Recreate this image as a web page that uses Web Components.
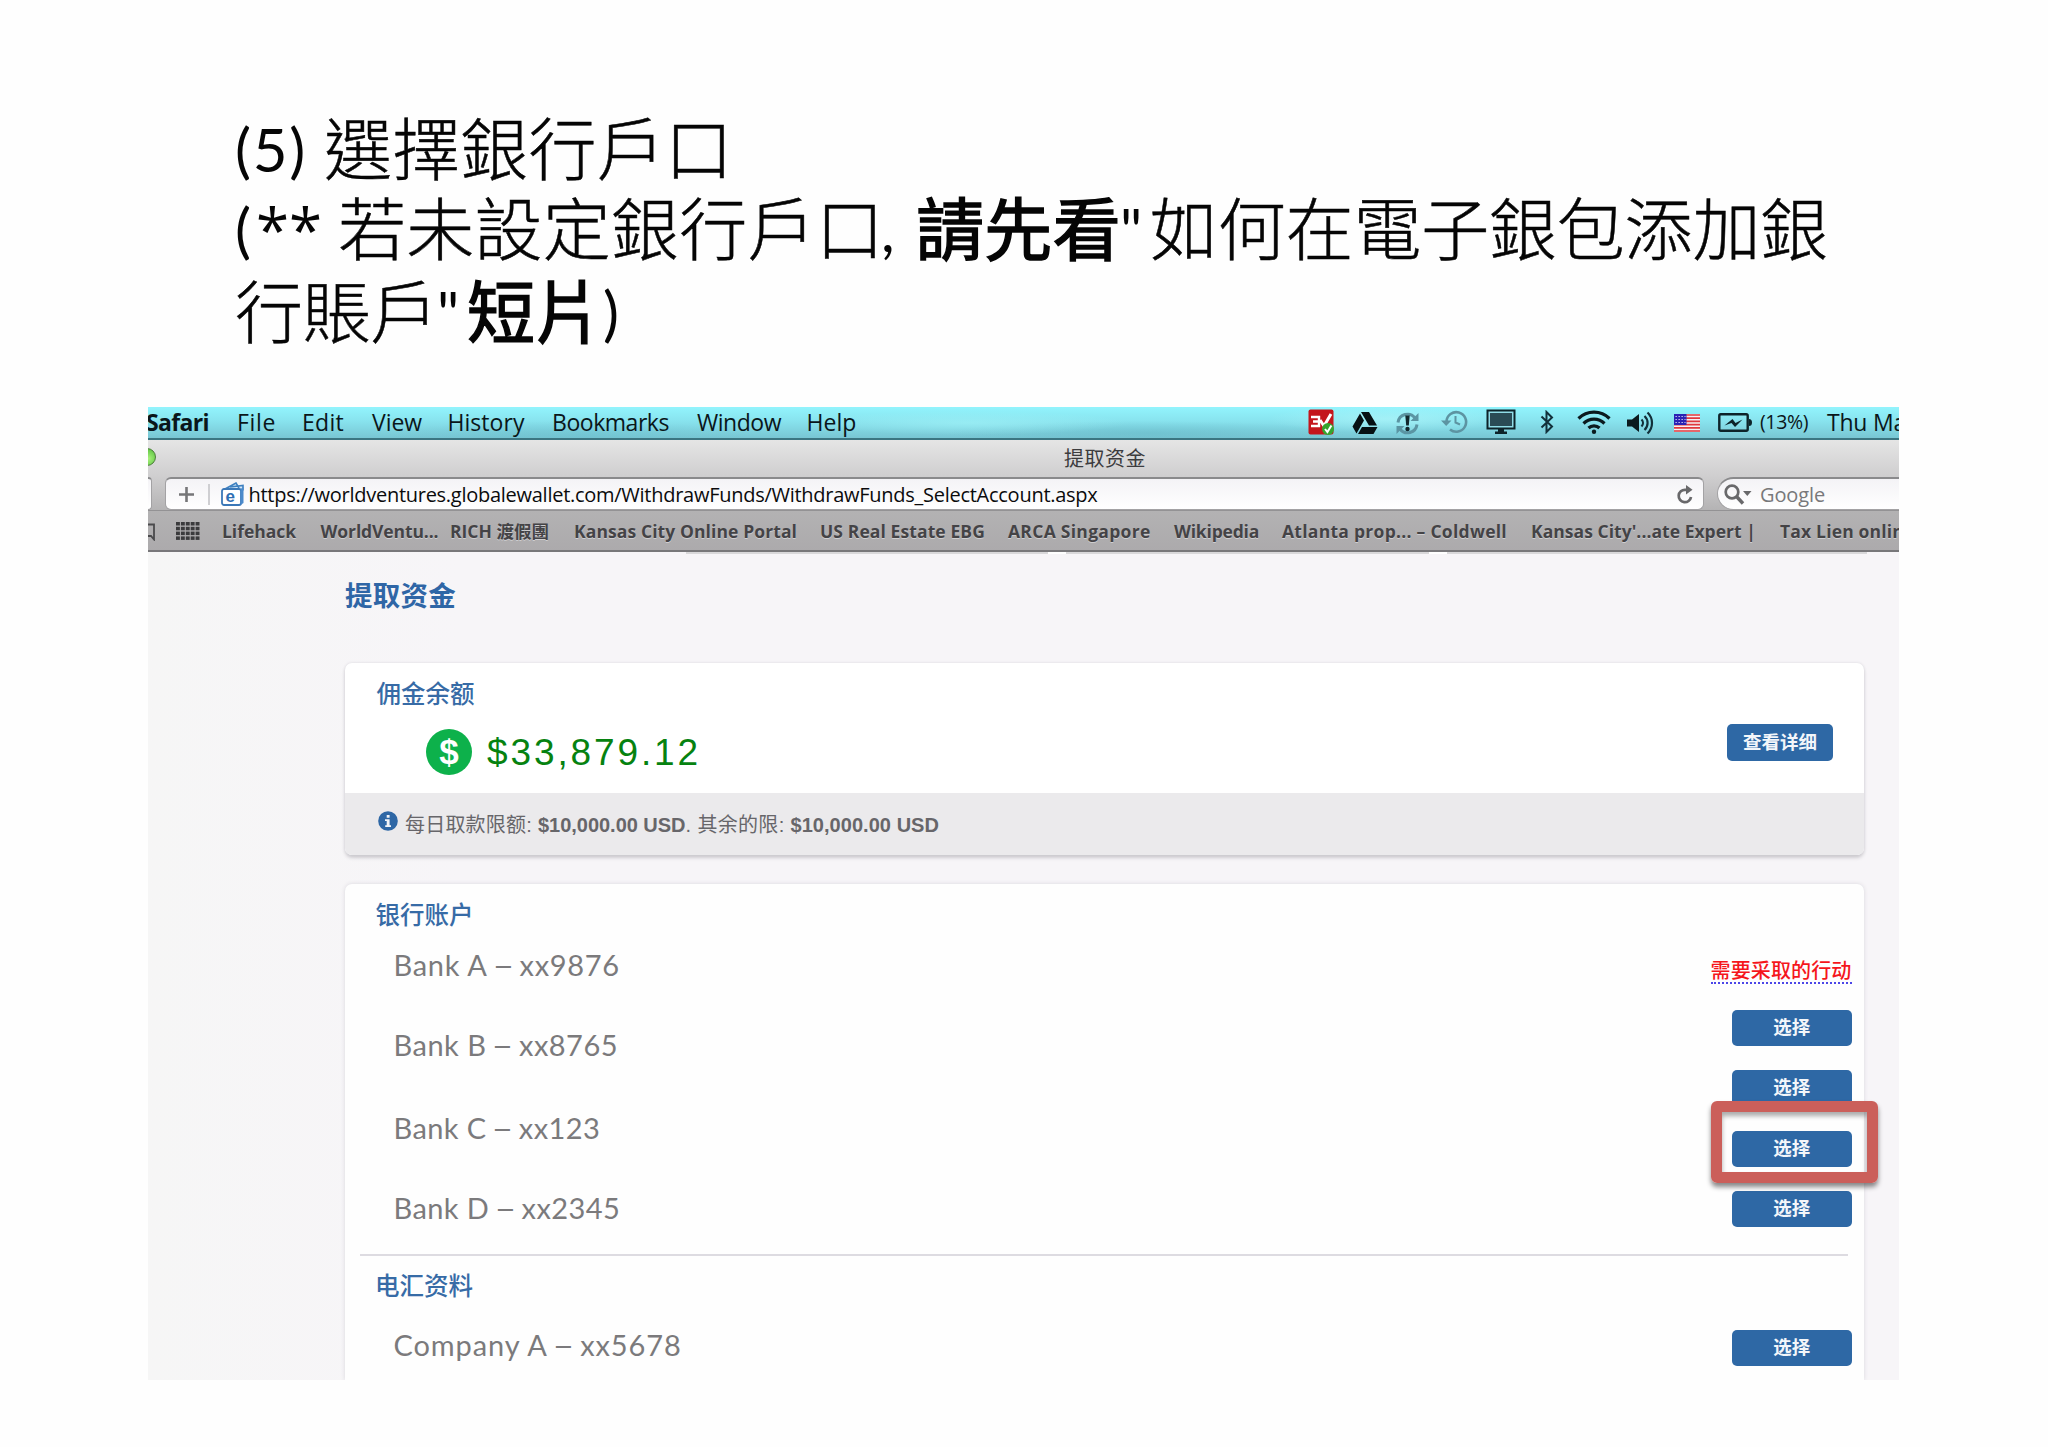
<!DOCTYPE html>
<html lang="zh">
<head>
<meta charset="utf-8">
<title>選擇銀行戶口</title>
<style>
html,body{margin:0;background:#fff}
body{width:2048px;height:1447px;overflow:hidden}
</style>
</head>
<body>
<slide-page></slide-page>
<script>
const define = (name, html, setup) => customElements.define(name, class extends HTMLElement {
  connectedCallback() {
    if (this.shadowRoot) return;
    this.attachShadow({mode: 'open'}).innerHTML = typeof html === 'function' ? html(this) : html;
    if (setup) setup(this, this.shadowRoot);
  }
});

/* One line of text, tracked so that it fills the width given in "w". */
define('fit-text', `<style>:host{display:block;flex:none;white-space:pre}span{display:inline-block;white-space:pre}</style><span><slot></slot></span>`,
  (el, root) => {
    const w = +el.getAttribute('w'), s = root.querySelector('span');
    const n = [...el.textContent].length;
    el.style.width = w + 'px';
    el.style.marginLeft = (el.getAttribute('gap') || 0) + 'px';
    s.style.letterSpacing = ((w - s.getBoundingClientRect().width) / n) + 'px';
  });

const ICONS = {
  av: [26,26,`<rect x=".5" y=".5" width="25" height="25" rx="2" fill="#c4161c"/><path d="M3 8h8v9H3m2-4.5h6" fill="none" stroke="#fff" stroke-width="2.4"/><path d="M12 11l4 6 7-12" fill="none" stroke="#fff" stroke-width="3"/><circle cx="20" cy="20" r="6" fill="#35a52f"/><path d="M17 20l2.4 3 4-6.500" fill="none" stroke="#fff" stroke-width="2"/>`],
  drive: [26,24,`<path d="M9 1h8l8 13.500h-8zM8 2.500l4 7L4.500 22.500l-4-7zM10 16h15.500l-4 7H6z" fill="#071114"/>`],
  sync: [25,25,`<g fill="none" stroke="#5b95a3" stroke-width="3"><path d="M3 11.500A9.500 9.500 0 0 1 20 7"/><path d="M22 13.500A9.500 9.500 0 0 1 5 18"/></g><path d="M23.500 2v8h-8zM1.500 23v-8h8z" fill="#5b95a3"/><path d="M10.300 4.500h4.400l-.9 10h-2.600z" fill="#12272d"/><circle cx="12.500" cy="18" r="2.200" fill="#12272d"/>`],
  clock: [27,24,`<path d="M5.500 11.500A9.800 9.800 0 1 1 9 19.500" fill="none" stroke="#5d94a2" stroke-width="2.600"/><path d="M0 10.500h10.500L5.200 16z" fill="#5d94a2"/><path d="M14.500 6v6.500l4.500 2" fill="none" stroke="#5d94a2" stroke-width="2"/>`],
  monitor: [30,25,`<rect x="1.500" y="1.500" width="27" height="18" fill="#8fdbe6" stroke="#0d2329" stroke-width="2"/><rect x="4" y="4" width="22" height="13" fill="#2a4b55"/><path d="M12 20h6v2.500h3V25H9v-2.500h3z" fill="#0d2329"/>`],
  bluetooth: [14,24,`<path d="M1.500 6.500l10.500 10-5.500 5.500V2L12 7.500 1.500 17.500" fill="none" stroke="#12303a" stroke-width="2"/>`],
  wifi: [34,25,`<g fill="none" stroke="#0b1a1e" stroke-width="3.200"><path d="M1.500 9.500a22 22 0 0 1 31 0"/><path d="M6.500 14.500a15 15 0 0 1 21 0"/><path d="M11.500 19a8 8 0 0 1 11 0"/></g><circle cx="17" cy="22.800" r="2.200" fill="#0b1a1e"/>`],
  speaker: [27,24,`<path d="M0 8.500h5L12 3v18l-7-5.500H0z" fill="#0b1a1e"/><g fill="none" stroke="#12303a" stroke-width="2.200"><path d="M14.500 8.500a5 5 0 0 1 0 7"/><path d="M17.500 5a9.500 9.500 0 0 1 0 14"/><path d="M20.500 1.500a14.500 14.500 0 0 1 0 21"/></g>`],
  flag: [26,18,`<rect width="26" height="18" fill="#f6f0f3"/><path d="M0 1h26M0 4.200h26M0 7.400h26M0 10.600h26M0 13.800h26M0 17h26" stroke="#e0383e" stroke-width="1.700"/><rect width="12.500" height="11" fill="#2a22b4"/><path d="M1.500 2.500h10M1.500 5.500h10M1.500 8.500h10" stroke="#d8d6f4" stroke-width="1.100" stroke-dasharray="1.300 1.700"/>`],
  battery: [35,19,`<rect x="1.300" y="1.300" width="28.400" height="16.400" rx="1.500" fill="none" stroke="#0d2329" stroke-width="2.400"/><path d="M31 6q3 0 3 3.500T31 13z" fill="#0d2329"/><path d="M6.500 12.500l8-6.500 3 4 7-3.500-7.500 7.500-3.500-4z" fill="#0d2329"/>`],
  book: [8,18,`<path d="M0 1.500h6v15l-3-3.500H0" fill="none" stroke="#4a4a4c" stroke-width="1.800"/>`],
  grid: [24,19,`<g fill="#3b3b3d">${[0,1,2,3].map(r=>[0,1,2,3,4].map(c=>`<rect x="${c*4.900}" y="${r*4.800}" width="3.900" height="3.500"/>`).join('')).join('')}</g>`],
  plus: [17,17,`<path d="M8.500 1v15M1 8.500h15" stroke="#767678" stroke-width="2.600"/>`],
  wallet: [24,24,`<path d="M4 7L15 1l3 5M9 5l13-1.500v5" fill="#d5e8f7" stroke="#3e80c0" stroke-width="1.600"/><rect x="1" y="7" width="19" height="16" rx="2" fill="#fff" stroke="#3b78b8" stroke-width="1.800"/><path d="M22.500 5v16l-3 2V7z" fill="#4b8acb"/>`],
  reload: [16,19,`<path d="M11.500 4.800H8.200A6.200 6.200 0 1 0 14 12" fill="none" stroke="#68686a" stroke-width="2.700"/><path d="M9 0l6.500 4.800L9 9.500z" fill="#68686a"/>`],
  search: [28,21,`<circle cx="8" cy="8" r="6.300" fill="none" stroke="#69696b" stroke-width="2.700"/><path d="M12.500 12.500l6.500 7" stroke="#69696b" stroke-width="3.400"/><path d="M19 7h8.500l-4.200 5z" fill="#69696b"/>`],
  info: [20,20,`<circle cx="10" cy="10" r="9.800" fill="#2e67a5"/><path d="M7 8.300h4.600v6H13V16H7.200v-1.700h1.500v-4.400H7zM8.700 4h2.900v2.700H8.700z" fill="#f2f4f7"/>`]
};
define('ui-icon', el => {
  const [w,h,body] = ICONS[el.getAttribute('name')];
  return `<style>:host{display:block;flex:none;width:${w}px;height:${h}px;margin-left:${el.getAttribute('gap')||0}px;margin-top:${el.getAttribute('drop')||0}px}svg{display:block}</style><svg width="${w}" height="${h}" viewBox="0 0 ${w} ${h}">${body}</svg>`;
});

define('slide-title', `<style>
:host{display:block;box-sizing:border-box;height:407px;padding:109px 0 0 235px;font:400 60px/80px Lato,"Noto Sans CJK TC",sans-serif;color:#050505}
.row{display:flex;height:80px}.row.last{margin-top:3px}
.c{font:300 68px/80px "Noto Sans CJK TC",sans-serif;margin-top:-3px;-webkit-text-stroke:.5px #050505}
.b{font-weight:400;-webkit-text-stroke:1.500px #050505}
.o{font-family:"Open Sans",sans-serif}
</style>
<div class="row"><fit-text w="72">(5)</fit-text><fit-text class="c" lang="zh-TW" gap="17" w="409">選擇銀行戶口</fit-text></div>
<div class="row"><fit-text w="21">(</fit-text><fit-text class="o" w="66">**</fit-text><fit-text class="c" lang="zh-TW" gap="16" w="546">若未設定銀行戶口</fit-text><fit-text gap="-3" w="15">,</fit-text><fit-text class="c b" lang="zh-TW" gap="20" w="205">請先看</fit-text><fit-text gap="-1" w="29">"</fit-text><fit-text class="c" lang="zh-TW" gap="1" w="678">如何在電子銀包添加銀</fit-text></div>
<div class="row last"><fit-text class="c" lang="zh-TW" w="203">行賬戶</fit-text><fit-text gap="-1" w="29">"</fit-text><fit-text class="c b" lang="zh-TW" gap="1" w="135">短片</fit-text><fit-text gap="1" w="18">)</fit-text></div>`);

define('menu-bar', `<style>
:host{display:flex;align-items:flex-start;box-sizing:border-box;height:33px;border-bottom:2px solid #3b7581;overflow:hidden;
background:radial-gradient(120px 14px at 1240px 12px,#b5f8fb99,transparent),radial-gradient(160px 12px at 820px 16px,#a2f3f899,transparent),radial-gradient(200px 12px at 1000px 26px,#5fb2c266,transparent),radial-gradient(180px 14px at 420px 28px,#67bccb66,transparent),linear-gradient(#92f4fd,#88e3ee 45%,#78c6d3);
font:400 23px/30px "Open Sans",sans-serif;color:#0a161a}
.s{font-size:19.500px}
</style>
<fit-text gap="-2" w="63" style="font-weight:700">Safari</fit-text><fit-text gap="28" w="39">File</fit-text><fit-text gap="26" w="42">Edit</fit-text><fit-text gap="28" w="50">View</fit-text><fit-text gap="25.5" w="77">History</fit-text><fit-text gap="27.5" w="117">Bookmarks</fit-text><fit-text gap="28" w="84">Window</fit-text><fit-text gap="25.5" w="50">Help</fit-text>
<ui-icon name="av" gap="451.5" drop="2"></ui-icon><ui-icon name="drive" gap="18" drop="4"></ui-icon><ui-icon name="sync" gap="17" drop="4"></ui-icon><ui-icon name="clock" gap="21" drop="3"></ui-icon><ui-icon name="monitor" gap="18" drop="2"></ui-icon><ui-icon name="bluetooth" gap="24" drop="3"></ui-icon><ui-icon name="wifi" gap="23" drop="2"></ui-icon><ui-icon name="speaker" gap="16" drop="4"></ui-icon><ui-icon name="flag" gap="20" drop="7"></ui-icon><ui-icon name="battery" gap="18" drop="6"></ui-icon>
<fit-text class="s" gap="7" w="48">(13%)</fit-text><fit-text gap="19" w="79">Thu Ma</fit-text>`);

define('browser-toolbar', `<style>
:host{display:block;position:relative;height:70px;background:linear-gradient(#e5e5e5,#cfcecf 52%,#b4b3b4);overflow:hidden}
.title{display:flex;height:37px;padding-left:916px;font:400 20px/36px "Noto Sans CJK SC",sans-serif;color:#3c3c3e}
.dot{position:absolute;left:-10px;top:8px;width:18px;height:18px;box-sizing:border-box;border-radius:50%;border:1.500px solid #4c7d3a;background:radial-gradient(circle at 60% 60%,#a8f07c,#43b52c)}
.fields{display:flex;height:33px}
.f{flex:none;box-sizing:border-box;height:33px;border:1px solid #a3a2a4;border-top:2px solid #8a8a8c;border-radius:6px;background:linear-gradient(#f4f3f6,#fff);display:flex;align-items:center;font:400 20px/30px "Open Sans",sans-serif;color:#0b0b0c}
.f fit-text{margin-top:1px}
.back{width:4px;border-left:0;border-radius:0 5px 5px 0}
.url{width:1539px;margin-left:13px}
.sep{width:1.500px;height:21px;background:#cfcfd2;margin-left:13px}
.q{width:200px;margin-left:13px;border-radius:17px 0 0 17px;color:#78787a}
.wrap{position:relative;margin-left:11px}
.wrap span{position:absolute;left:5px;top:7px;font:700 17px/15px "Liberation Sans",sans-serif;color:#2f6fb4}
</style>
<div class="title"><fit-text w="82">提取资金</fit-text></div><div class="dot"></div>
<div class="fields"><div class="f back"></div>
<div class="f url"><ui-icon name="plus" gap="12"></ui-icon><div class="sep"></div><div class="wrap"><ui-icon name="wallet"></ui-icon><span>e</span></div><fit-text gap="4" w="849">https://worldventures.globalewallet.com/WithdrawFunds/WithdrawFunds_SelectAccount.aspx</fit-text><ui-icon name="reload" gap="579"></ui-icon></div>
<div class="f q"><ui-icon name="search" gap="6"></ui-icon><fit-text gap="8" w="65">Google</fit-text></div></div>`);

define('bookmarks-bar', `<style>
:host{display:flex;align-items:flex-start;box-sizing:border-box;height:42px;border-top:1px solid #939294;border-bottom:2px solid #78777a;background:linear-gradient(#b3b2b3,#acaaac);overflow:hidden;font:700 17.500px/40px "Open Sans","Noto Sans CJK TC",sans-serif;color:#444346;text-shadow:0 1px 0 #cfced0}
</style>
<ui-icon name="book" drop="12"></ui-icon><ui-icon name="grid" gap="19.5" drop="11"></ui-icon><fit-text gap="22.5" w="74">Lifehack</fit-text><fit-text gap="24.5" w="118">WorldVentu...</fit-text><fit-text lang="zh-TW" gap="11.5" w="99">RICH 渡假團</fit-text><fit-text gap="25" w="223">Kansas City Online Portal</fit-text><fit-text gap="23" w="165">US Real Estate EBG</fit-text><fit-text gap="23" w="142.5">ARCA Singapore</fit-text><fit-text gap="23.5" w="85">Wikipedia</fit-text><fit-text gap="23" w="225">Atlanta prop... – Coldwell</fit-text><fit-text gap="24" w="225">Kansas City'...ate Expert |</fit-text><fit-text gap="24" w="124">Tax Lien onlin</fit-text>`);

define('action-button', el => `<style>
:host{display:flex;flex:none;box-sizing:border-box;justify-content:center;width:${el.getAttribute('w')||119.5}px;height:36px;border-radius:5px;background:#2e68a5;color:#f3f6fa;font:700 18.500px/32px "Noto Sans CJK SC",sans-serif}
</style><slot></slot>`);

define('balance-card', `<style>
:host{display:block;width:1519px;height:192px;border-radius:7px;background:#fff;box-shadow:0 0 3px #d9d7dd,0 3px 4px -1px #b9b7bc;overflow:hidden}
.top{display:flex;justify-content:space-between;height:130px}
.h{font:500 24.500px/36px "Noto Sans CJK SC",sans-serif;color:#376ba6;padding:12px 0 0 31.500px}
.amt{display:flex;align-items:center;height:46px;padding:17.500px 0 0 81px;font:400 37px/46px "Liberation Sans",sans-serif;color:#068210}
.amt fit-text{padding-top:3px}
.coin{width:46px;height:46px;border-radius:50%;background:#0db14b;color:#fff;font:700 35px/46px "Liberation Sans",sans-serif;text-align:center}
action-button{margin:60.500px 31px 0 0;height:37px;line-height:34px}
.info{display:flex;height:62px;background:#ebeaec;font:400 20px/65px "Liberation Sans","Noto Sans CJK SC",sans-serif;color:#67666a;padding-left:33px}
.info .b{font-weight:700}
</style>
<div class="top"><div><div class="h"><fit-text w="98">佣金余额</fit-text></div><div class="amt"><div class="coin">$</div><fit-text gap="15" w="214">$33,879.12</fit-text></div></div><action-button w="106">查看详细</action-button></div>
<div class="info"><ui-icon name="info" drop="18"></ui-icon><fit-text gap="7" w="127">每日取款限额:</fit-text><fit-text class="b" gap="6" w="147.5">$10,000.00 USD</fit-text><fit-text w="6">.</fit-text><fit-text gap="6" w="87">其余的限:</fit-text><fit-text class="b" gap="6" w="148.5">$10,000.00 USD</fit-text></div>`);

define('accounts-card', `<style>
:host{display:block;width:1519px;height:496px;border-radius:7px 7px 0 0;background:#fefefe;box-shadow:0 0 4px #d9d7dd}
.sec{display:flex;justify-content:space-between}
.one{height:370px;border-bottom:2px solid #dddbe1;margin:0 16px 0 15px}
.two{margin:0 16px 0 15px}
.h{font:500 24.500px/36px "Noto Sans CJK SC",sans-serif;color:#376ba6;padding:12px 0 0 15.500px}
.names{display:flex;flex-direction:column;padding-left:33.500px;font:400 29px/40px Lato,sans-serif;color:#7b7a7c}
.names i{font-style:normal;letter-spacing:0;display:inline-block;transform:scaleX(1.300)}
.acts{display:flex;flex-direction:column;align-items:flex-end;margin-right:-3.500px}
.need{font:500 20px/26px "Noto Sans CJK SC",sans-serif;color:#f5161c;border-bottom:2px dotted #4c46e8;margin-top:73px;height:25px;margin-bottom:26px}
.acts action-button{margin-bottom:24.400px}
</style>
<div class="sec one"><div><div class="h"><fit-text w="98">银行账户</fit-text></div><div class="names"><fit-text w="227" style="margin-top:13px">Bank A <i>–</i> xx9876</fit-text><fit-text w="225" style="margin-top:40px">Bank B <i>–</i> xx8765</fit-text><fit-text w="207" style="margin-top:43px">Bank C <i>–</i> xx123</fit-text><fit-text w="227" style="margin-top:40px">Bank D <i>–</i> xx2345</fit-text></div></div>
<div class="acts"><div class="need"><fit-text w="141">需要采取的行动</fit-text></div><action-button>选择</action-button><action-button>选择</action-button><action-button>选择</action-button><action-button>选择</action-button></div></div>
<div class="sec two"><div><div class="h" style="padding-top:11px;padding-left:15px"><fit-text w="98">电汇资料</fit-text></div><div class="names"><fit-text w="289" style="margin-top:22px">Company A <i>–</i> xx5678</fit-text></div></div><div class="acts"><action-button style="margin-top:74px">选择</action-button></div></div>`);

define('page-content', `<style>
:host{display:block;height:828px;background:linear-gradient(90deg,#f6f6f6,#f7f5f8 18%);overflow:hidden}
.edge{height:2px;margin:0 32px 0 538px;background:linear-gradient(90deg,#d9d8da 0 362px,#fff 362px 380px,#d9d8da 380px 743px,#fff 743px 761px,#d9d8da 761px)}
.h{font:700 27.500px/40px "Noto Sans CJK SC",sans-serif;color:#2f66a6;padding:20px 0 0 197px;height:86px;box-sizing:border-box}
balance-card,accounts-card{margin-left:197px}
balance-card{margin-top:23px}
accounts-card{margin-top:29px}
</style><div class="edge"></div><div class="h"><fit-text w="111">提取资金</fit-text></div><balance-card></balance-card><accounts-card></accounts-card>`);

define('highlight-frame', `<style>
:host{display:block;position:absolute;left:1711px;top:1101px;box-sizing:border-box;width:167px;height:82px;border:11px solid #cb5f5a;border-radius:6px;box-shadow:0 4px 5px #0007,inset 0 4px 5px #0005}
</style>`);

define('slide-page', `<style>
:host{display:block;position:relative;width:2048px;height:1447px;background:#fefefe}
.shot{width:1751px;height:973px;margin-left:148px;overflow:hidden}
</style>
<slide-title></slide-title>
<div class="shot"><menu-bar></menu-bar><browser-toolbar></browser-toolbar><bookmarks-bar></bookmarks-bar><page-content></page-content></div>
<highlight-frame></highlight-frame>`);
</script>
</body>
</html>
